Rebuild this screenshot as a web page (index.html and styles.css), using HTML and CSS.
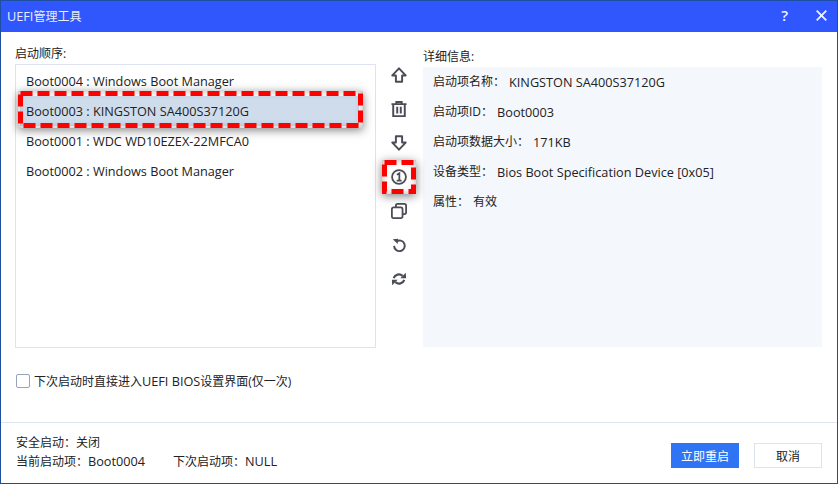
FILE: index.html
```html
<!DOCTYPE html>
<html lang="zh-CN">
<head>
<meta charset="utf-8">
<title>UEFI管理工具</title>
<link rel="stylesheet" href="styles.css">
</head>
<body>
<div class="window">
  <header class="titlebar">
    <span class="title"><span class="latin">UEFI</span>管理工具</span>
    <div class="controls">
      <span class="help">?</span>
      <svg class="close" width="11" height="11" viewBox="0 0 11 11"><path d="M.7.7l9.6 9.6M10.3.7L.7 10.3" stroke="#f2f4ff" stroke-width="1.8" fill="none"/></svg>
    </div>
  </header>
  <main class="content">
    <section class="left">
      <div class="label">启动顺序:</div>
      <ul class="list">
        <li class="row">Boot0004 : Windows Boot Manager</li>
        <li class="row selected">Boot0003 : KINGSTON SA400S37120G<span class="callout callout-row"><svg class="dash" width="345" height="37" viewBox="0 0 345 37"><rect x="2.5" y="2.5" width="340" height="32"/></svg></span></li>
        <li class="row">Boot0001 : WDC WD10EZEX-22MFCA0</li>
        <li class="row">Boot0002 : Windows Boot Manager</li>
      </ul>
    </section>
    <nav class="tools">
      <svg class="tool" viewBox="0 0 18 18"><path d="M9 1.5L1.5 9.5H5.5v7h7v-7h4z" fill="none" stroke="#4a4d55" stroke-width="2.2" stroke-linejoin="round"/></svg>
      <svg class="tool" viewBox="0 0 18 18"><path d="M.5 3.5h17M6 3V1.2h6V3M2.5 4v13h13V4M7 6.5v7.5M11 6.5v7.5" fill="none" stroke="#4a4d55" stroke-width="2.2"/></svg>
      <svg class="tool" viewBox="0 0 18 18"><path d="M9 16.5L1.5 8.5H5.5v-7h7v7h4z" fill="none" stroke="#4a4d55" stroke-width="2.2" stroke-linejoin="round"/></svg>
      <div class="tool-wrap">
        <svg class="tool" viewBox="0 0 18 18"><circle cx="9" cy="9" r="7.8" fill="none" stroke="#4a4d55" stroke-width="2"/><path d="M6.6 6.4L9.4 4.8v8M6.4 13h5.6" fill="none" stroke="#4a4d55" stroke-width="2"/></svg>
        <span class="callout callout-tool"><svg class="dash" width="34" height="34" viewBox="0 0 34 34"><rect x="2.5" y="2.5" width="29" height="29"/></svg></span>
      </div>
      <svg class="tool" viewBox="0 0 18 18"><path d="M5.5 4.5V3q0-2 2-2h7.5q2 0 2 2v7.5q0 2-2 2H13" fill="none" stroke="#4a4d55" stroke-width="2"/><rect x="1" y="5" width="12" height="12" rx="2" fill="none" stroke="#4a4d55" stroke-width="2"/></svg>
      <svg class="tool" viewBox="0 0 18 18"><path d="M3.5 10A6 6 0 1 0 6 5" fill="none" stroke="#4a4d55" stroke-width="2.2"/><path d="M2 2.5L8 2 7.5 8z" fill="#4a4d55"/></svg>
      <svg class="tool" viewBox="0 0 18 18"><path d="M3 8A6.2 6.2 0 0 1 13 5.5" fill="none" stroke="#4a4d55" stroke-width="2.4"/><path d="M15 10A6.2 6.2 0 0 1 5 12.5" fill="none" stroke="#4a4d55" stroke-width="2.4"/><path d="M10.5 8.2L17 8.2 16.6 2zM7.5 9.8L1 9.8 1.4 16z" fill="#4a4d55"/></svg>
    </nav>
    <section class="right">
      <div class="label label-right">详细信息:</div>
      <div class="details">
        <div class="row detail"><span class="key">启动项名称：</span><span>KINGSTON SA400S37120G</span></div>
        <div class="row detail"><span class="key">启动项ID：</span><span>Boot0003</span></div>
        <div class="row detail"><span class="key">启动项数据大小：</span><span>171KB</span></div>
        <div class="row detail"><span class="key">设备类型：</span><span>Bios Boot Specification Device [0x05]</span></div>
        <div class="row detail"><span class="key">属性：</span><span class="key">有效</span></div>
      </div>
    </section>
  </main>
  <label class="check"><span class="box"></span><span>下次启动时直接进入<span class="latin">UEFI BIOS</span>设置界面(仅一次)</span></label>
  <footer class="footer">
    <div class="status">
      <div>安全启动：关闭</div>
      <div class="status-line"><span>当前启动项：<span class="latin">Boot0004</span></span><span>下次启动项：<span class="latin">NULL</span></span></div>
    </div>
    <div class="buttons">
      <button class="btn primary">立即重启</button>
      <button class="btn">取消</button>
    </div>
  </footer>
</div>
</body>
</html>
```
FILE: styles.css
```css
* { box-sizing: border-box; }
html, body { margin: 0; padding: 0; }
body {
  width: 838px;
  height: 484px;
  overflow: hidden;
  font-family: "Open Sans", "Noto Sans CJK SC", sans-serif;
  font-size: 12.7px;
  color: #222;
  background: #fff;
}
.latin { font-size: 12.7px; }
.window {
  width: 838px;
  height: 484px;
  border: 1px solid #1c4f9f;
  border-top: 0;
  display: flex;
  flex-direction: column;
}
.titlebar {
  height: 32px;
  flex: none;
  background: #3056fd;
  display: flex;
  align-items: center;
  justify-content: space-between;
  color: #e8edff;
  padding: 0 10px 2px 6px;
  border-top: 1px solid #1c4f9f;
}
.title { font-size: 12px; }
.controls { display: flex; align-items: center; gap: 28px; }
.help { font-size: 15px; font-weight: 600; color: #f2f4ff; line-height: 1; }
.content {
  display: flex;
  height: 316px;
  flex: none;
  padding: 12px 15px 0 14px;
}
.left { width: 361px; flex: none; }
.label { height: 20px; line-height: 20px; font-size: 12px; }
.list {
  list-style: none;
  margin: 0;
  padding: 1px 0 0;
  height: 284px;
  border: 1px solid #dde3f0;
}
.row { height: 30px; line-height: 30px; white-space: nowrap; }
.list .row { padding-left: 10px; position: relative; }
.list .selected { background: #cfdcec; margin: 0 16px 0 4px; padding-left: 6px; }
.callout {
  position: absolute;
  display: block;
  box-shadow: 0 2px 9px rgba(0, 0, 0, .5), inset 0 0 9px rgba(0, 0, 0, .3);
  pointer-events: none;
}
.dash { display: block; }
.dash rect {
  fill: none;
  stroke: #f00;
  stroke-width: 5;
  stroke-dasharray: 12 5;
}
.callout-row { left: -2px; top: -5px; width: 345px; height: 37px; }
.tools {
  width: 46px;
  flex: none;
  padding-top: 23px;
  display: flex;
  flex-direction: column;
  align-items: center;
  gap: 18px;
}
.tool { width: 16px; height: 16px; display: block; flex: none; }
.tool-wrap { position: relative; }
.callout-tool { left: -9px; top: -9px; width: 34px; height: 34px; }
.right { flex: 1; min-width: 0; padding: 3px 0 0 1px; }
.label-right { height: 20px; }
.details {
  height: 280px;
  background: #f4f7fc;
  padding: 0 10px;
}
.detail { display: flex; gap: 4px; }
.key { font-size: 12px; }
.check {
  display: flex;
  align-items: center;
  gap: 4px;
  height: 20px;
  margin: 23px 0 0 15px;
  font-size: 12px;
  flex: none;
}
.box {
  width: 14px;
  height: 14px;
  border: 1px solid #97a3bd;
  border-radius: 2px;
  background: #fff;
}
.footer {
  margin-top: 31px;
  flex: 1;
  border-top: 1px solid #dfe5f2;
  display: flex;
  justify-content: space-between;
  padding: 10px 15px 0 15px;
}
.status { font-size: 12px; line-height: 19px; }
.status-line { display: flex; gap: 28px; }
.buttons { display: flex; gap: 15px; padding-top: 10px; }
.btn {
  width: 68px;
  height: 25px;
  font: inherit;
  font-size: 12px;
  color: #222;
  background: #fff;
  border: 1px solid #dde3f0;
  padding: 0;
}
.primary { background: #3074f6; border-color: #3074f6; color: #fff; }
```
